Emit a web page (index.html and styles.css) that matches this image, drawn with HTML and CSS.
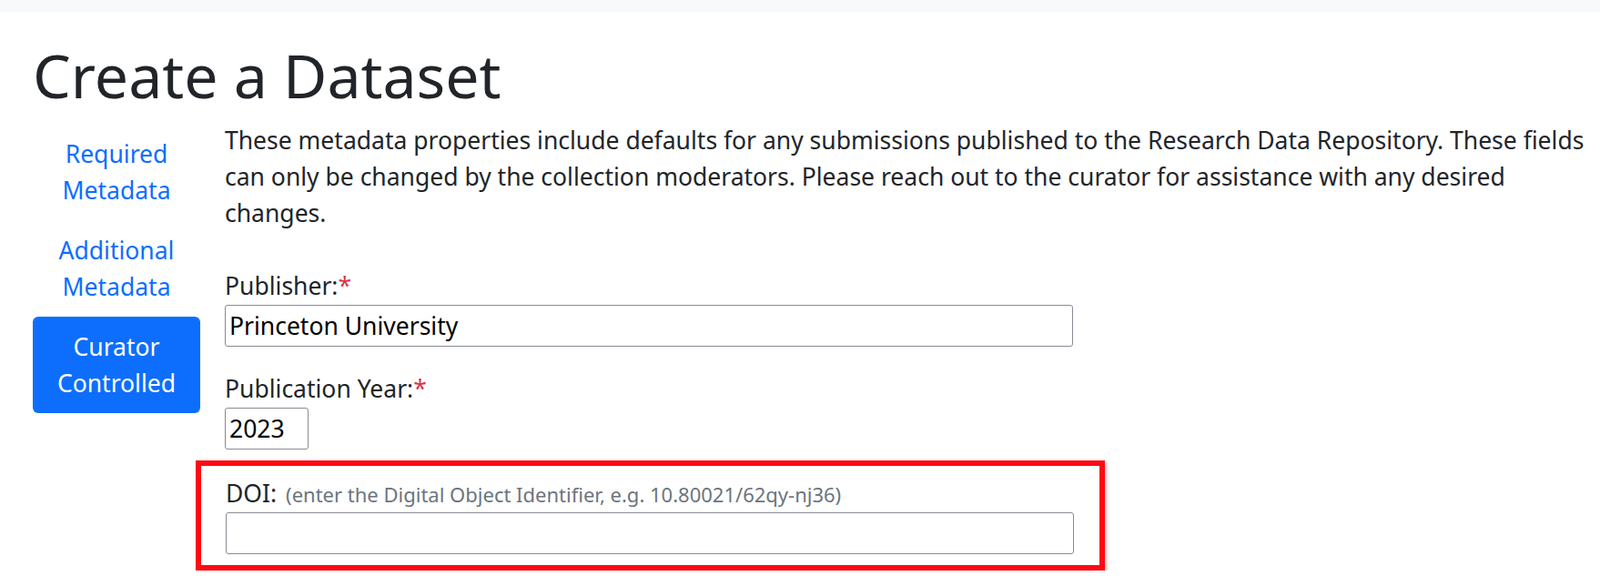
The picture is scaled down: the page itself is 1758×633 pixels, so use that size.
FILE: index.html
```html
<!DOCTYPE html>
<html lang="en">
<head>
<meta charset="utf-8">
<title>Create a Dataset</title>
<link rel="stylesheet" href="styles.css">
</head>
<body>
<div class="topbar"></div>
<main class="page">
  <h1 class="title">Create a Dataset</h1>
  <div class="layout">
    <nav class="side">
      <a class="side-link" href="#">Required Metadata</a>
      <a class="side-link" href="#">Additional Metadata</a>
      <a class="side-link active" href="#">Curator Controlled</a>
    </nav>
    <section class="content">
      <p class="intro">These metadata properties include defaults for any submissions published to the Research Data Repository. These fields can only be changed by the collection moderators. Please reach out to the curator for assistance with any desired changes.</p>
      <div class="field">
        <label class="label" for="publisher">Publisher:<span class="req">*</span></label>
        <input class="input input-wide" id="publisher" type="text" value="Princeton University">
      </div>
      <div class="field">
        <label class="label" for="year">Publication Year:<span class="req">*</span></label>
        <input class="input input-year" id="year" type="text" value="2023">
      </div>
      <div class="highlight">
        <label class="label" for="doi">DOI: <span class="hint">(enter the Digital Object Identifier, e.g. 10.80021/62qy-nj36)</span></label>
        <input class="input input-wide" id="doi" type="text" value="">
      </div>
    </section>
  </div>
</main>
</body>
</html>
```

FILE: styles.css
```css
* { box-sizing: border-box; }

body {
  margin: 0;
  background: #fff;
  color: #212529;
  font-family: "Noto Sans", "Open Sans", "Liberation Sans", sans-serif;
  font-size: 26.5px;
  line-height: 40px;
}

.topbar {
  height: 13px;
  background: #f8f9fa;
}

.page {
  padding: 0 4px 0 36px;
}

.title {
  margin: 29px 0 12px;
  font-family: "Noto Sans", "Open Sans", sans-serif;
  font-size: 66.2px;
  font-weight: 400;
  line-height: 80px;
  color: #212529;
}

.layout {
  display: flex;
  align-items: flex-start;
  gap: 27px;
}

.side {
  flex: 0 0 184px;
  display: flex;
  flex-direction: column;
  margin-top: 2px;
}

.side-link {
  display: block;
  padding: 13px 10px;
  text-align: center;
  color: #0d6efd;
  text-decoration: none;
  border-radius: 6px;
}

.side-link.active {
  background: #0d6efd;
  color: #fff;
}

.content {
  flex: 1 1 auto;
  min-width: 0;
}

.intro {
  margin: 0 0 40px;
}

.field {
  margin-bottom: 26px;
}

.field + .field {
  margin-bottom: 12px;
}

.label {
  display: block;
  line-height: 41px;
}

.req {
  color: #dc3545;
}

.hint {
  margin-left: 3px;
  font-size: 22px;
  color: #6c757d;
}

.input {
  display: block;
  height: 46px;
  padding: 0 4px;
  font-family: inherit;
  font-size: 26.5px;
  color: #000;
  background: #fff;
  border: 1px solid #8a8a95;
  border-radius: 3px;
}

.input-wide {
  width: 932px;
}

.input-year {
  width: 92px;
}

.highlight {
  width: 999px;
  margin-left: -32px;
  padding: 10px 29px 12px 27px;
  border: 6px solid #ff0a14;
  box-shadow: 2px 3px 4px rgba(0, 0, 0, 0.25);
}

.highlight .label {
  line-height: 40px;
}
```
